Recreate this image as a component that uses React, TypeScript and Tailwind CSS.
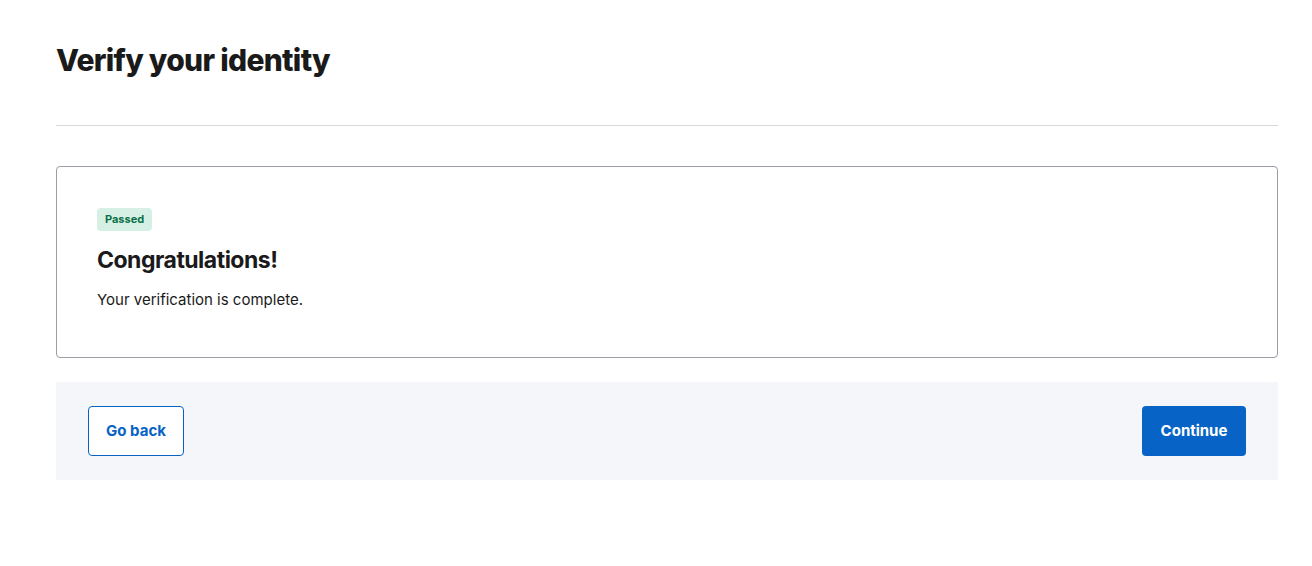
export default function App() {
  return (
    <div className="min-h-screen bg-white pl-[56px] pr-[34px] pt-[40px] text-[#1a1a1a]" style={{ fontFamily: 'Inter, "Liberation Sans", Arial, sans-serif' }}>
      <h1 className="text-[30px] font-extrabold leading-[40px] tracking-[-0.7px]">Verify your identity</h1>
      <div className="mt-[45px] h-px bg-[#d9d9d9]" />
      <div className="mt-[40px] rounded-[4px] border border-[#9a9ea6] px-[40px] pt-[41px] pb-[47px]">
        <div className="flex">
          <span className="flex h-[23px] items-center rounded-[4px] bg-[#d7f0e5] px-[8px] text-[11px] font-bold text-[#0b7048]">Passed</span>
        </div>
        <h2 className="mt-[15px] text-[23px] font-bold leading-[28px] tracking-[-0.5px]">Congratulations!</h2>
        <p className="mt-[16px] text-[15px] leading-[20px]">Your verification is complete.</p>
      </div>
      <div className="mt-[24px] flex items-center justify-between bg-[#f4f6fa] px-[32px] py-[24px]">
        <button className="h-[50px] w-[96px] rounded-[4px] border border-[#0764c6] bg-white text-[15px] font-bold text-[#0764c6]">Go back</button>
        <button className="h-[50px] w-[104px] rounded-[4px] bg-[#0764c6] text-[15px] font-bold text-white">Continue</button>
      </div>
    </div>
  );
}
